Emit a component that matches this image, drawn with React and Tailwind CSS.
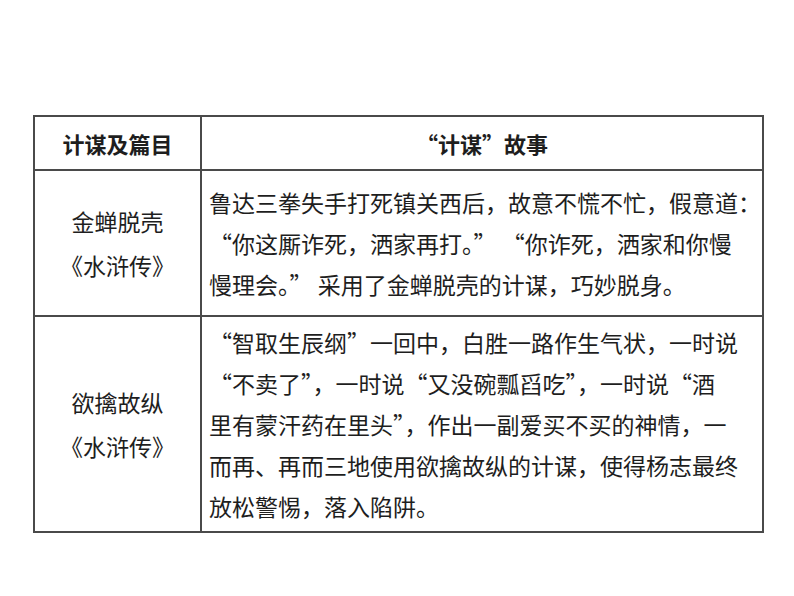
import React from 'react';

const rows = [
    {
        name: '金蝉脱壳',
        book: '《水浒传》',
        lines: [
            '鲁达三拳失手打死镇关西后，故意不慌不忙，假意道：',
            '“你这厮诈死，洒家再打。” “你诈死，洒家和你慢',
            '慢理会。” 采用了金蝉脱壳的计谋，巧妙脱身。'
        ],
        height: 'h-[146px]'
    },
    {
        name: '欲擒故纵',
        book: '《水浒传》',
        lines: [
            '“智取生辰纲”一回中，白胜一路作生气状，一时说',
            '“不卖了”，一时说“又没碗瓢舀吃”，一时说“酒',
            '里有蒙汗药在里头”，作出一副爱买不买的神情，一',
            '而再、再而三地使用欲擒故纵的计谋，使得杨志最终',
            '放松警惕，落入陷阱。'
        ],
        height: 'h-[216px]'
    }
];

const App = () => {
    return (
        <div
            className="w-[794px] h-[596px] bg-white pt-[115px] pl-[33px] text-[#1e1e1e]"
            style={{ fontFamily: '"Noto Sans CJK SC", "Noto Sans", sans-serif' }}
        >
            <table className="border-collapse border-2 border-[#4a4a4a] w-[729px] table-fixed">
                <colgroup>
                    <col className="w-[167px]" />
                    <col className="w-[562px]" />
                </colgroup>
                <thead>
                    <tr className="h-[54px]">
                        <th className="border-2 border-[#4a4a4a] text-[22px] font-bold">
                            计谋及篇目
                        </th>
                        <th className="border-2 border-[#4a4a4a] text-[22px] font-bold">
                            “计谋”故事
                        </th>
                    </tr>
                </thead>
                <tbody>
                    {rows.map((row) => (
                        <tr key={row.name} className={row.height}>
                            <td className="border-2 border-[#4a4a4a] text-center text-[23px] leading-[44px]">
                                <div>{row.name}</div>
                                <div>{row.book}</div>
                            </td>
                            <td className="border-2 border-[#4a4a4a] pl-[7px] pr-0 text-[23px] leading-[41px] whitespace-nowrap overflow-hidden">
                                {row.lines.map((line) => (
                                    <div key={line}>{line}</div>
                                ))}
                            </td>
                        </tr>
                    ))}
                </tbody>
            </table>
        </div>
    );
};

export default App;
